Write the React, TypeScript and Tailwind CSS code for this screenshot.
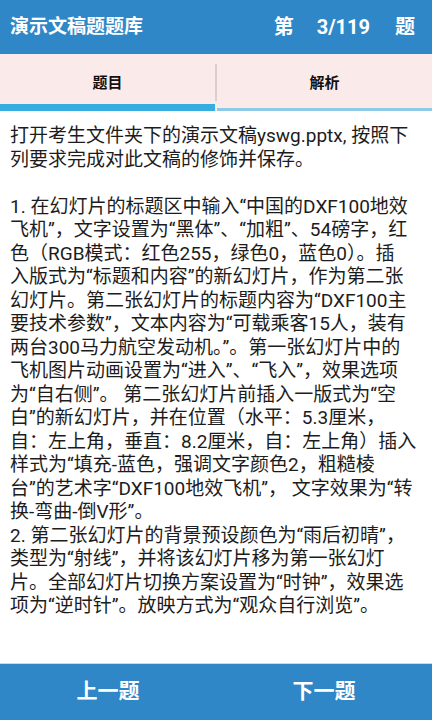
import React from "react";

const LINES: string[] = [
  "打开考生文件夹下的演示文稿yswg.pptx, 按照下",
  "列要求完成对此文稿的修饰并保存。",
  "",
  "1. 在幻灯片的标题区中输入“中国的DXF100地效",
  "飞机”，文字设置为“黑体”、“加粗”、54磅字，红",
  "色（RGB模式：红色255，绿色0，蓝色0）。插",
  "入版式为“标题和内容”的新幻灯片，作为第二张",
  "幻灯片。第二张幻灯片的标题内容为“DXF100主",
  "要技术参数”，文本内容为“可载乘客15人，装有",
  "两台300马力航空发动机。”。第一张幻灯片中的",
  "飞机图片动画设置为“进入”、“飞入”，效果选项",
  "为“自右侧”。 第二张幻灯片前插入一版式为“空",
  "白”的新幻灯片，并在位置（水平：5.3厘米，",
  "自：左上角，垂直：8.2厘米，自：左上角）插入",
  "样式为“填充-蓝色，强调文字颜色2，粗糙棱",
  "台”的艺术字“DXF100地效飞机”， 文字效果为“转",
  "换-弯曲-倒V形”。",
  "2. 第二张幻灯片的背景预设颜色为“雨后初晴”，",
  "类型为“射线”，并将该幻灯片移为第一张幻灯",
  "片。全部幻灯片切换方案设置为“时钟”，效果选",
  "项为“逆时针”。放映方式为“观众自行浏览”。",
];

const FONT = "font-['Roboto','Noto_Sans_CJK_SC',sans-serif]";

export default function App() {
  return (
    <div className={`flex h-[720px] w-[432px] flex-col overflow-hidden bg-white ${FONT}`}>
      {/* top bar */}
      <header className="flex h-[54px] shrink-0 items-center justify-between bg-[#2f87c7] pl-[10px] pr-[17px] text-white">
        <h1 className="text-[19px] font-bold">演示文稿题题库</h1>
        <div className="flex items-center text-[20px] font-bold">
          <span>第</span>
          <span className="ml-[23px]">3/119</span>
          <span className="ml-[25px]">题</span>
        </div>
      </header>

      {/* tabs */}
      <nav className="flex h-[57px] shrink-0 bg-[#fbeaea]">
        <button className="relative flex flex-1 items-center justify-center pt-[2px] text-[15px] font-bold text-[#111]">
          题目
          <span className="absolute bottom-0 left-0 right-0 h-[7px] bg-[#35ade0]" />
        </button>
        <div className="my-[10px] w-[2px] bg-[#d9cfcf]" />
        <button className="relative flex flex-1 items-center justify-center pt-[2px] text-[15px] font-bold text-[#111]">
          解析
          <span className="absolute bottom-0 left-0 right-0 h-[3px] bg-[#8fcbe8]" />
        </button>
      </nav>

      {/* question body */}
      <main className="flex-1 px-[10px] pt-[13px] text-[19px] leading-[23.5px] text-[#1c1c1c]">
        {LINES.map((line, i) => (
          <div key={i} className="h-[23.5px] whitespace-nowrap">
            {line}
          </div>
        ))}
      </main>

      {/* prev / next */}
      <footer className="flex h-[57px] shrink-0 border-t border-[#d6d6d6] bg-[#2f87c7] text-[21px] font-bold text-white">
        <button className="flex flex-1 items-center justify-center">上一题</button>
        <button className="flex flex-1 items-center justify-center">下一题</button>
      </footer>
    </div>
  );
}
